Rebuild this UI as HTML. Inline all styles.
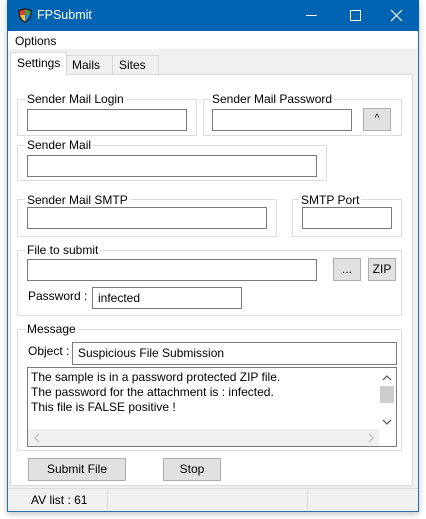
<!DOCTYPE html>
<html><head><style>
*{box-sizing:border-box;margin:0;padding:0}
body{width:426px;height:519px;background:#fff;position:relative;overflow:hidden;font-family:"Liberation Sans",sans-serif;font-size:12px;color:#000}
.a{position:absolute}
.win{left:7px;top:0;width:412px;height:512px;border:1px solid #2b6cb0;background:#f0f0f0;box-shadow:0 2px 6px rgba(0,0,0,.25)}
.tb{left:7px;top:0;width:412px;height:31px;background:#0063b1;color:#fff}
.gb{border:1px solid #dcdcdc}
.lbl{background:#fff;padding:0 2px;line-height:14px;white-space:nowrap}
.tx{border:1px solid #7a7a7a;background:#fff;padding:2px 5px;line-height:16px;white-space:nowrap}
.bt{border:1px solid #adadad;background:#e1e1e1;text-align:center;line-height:20px}
</style></head><body>
<div class="a win"></div>
<div class="a tb">
<svg class="a" style="left:10px;top:7px" width="16" height="17" viewBox="0 0 16 17"><path d="M8 1 L15 3 L14 10 Q12 14 8 16 Q4 14 2 10 L1 3 Z" fill="#222"/><path d="M8 2.5 L2.5 4 L3 8 L8 8 Z" fill="#e53935"/><path d="M8 2.5 L13.5 4 L13 8 L8 8Z" fill="#43a047"/><path d="M3 8 L8 8 L8 14.5 Q4.5 12.5 3 8Z" fill="#fbc02d"/><path d="M8 8 L13 8 Q11.5 12.5 8 14.5Z" fill="#1e88e5"/></svg>
<div class="a" style="left:30px;top:8px;font-size:12.5px">FPSubmit</div>
<div class="a" style="left:299px;top:15px;width:11px;height:1px;background:#fff"></div>
<div class="a" style="left:343px;top:10px;width:11px;height:11px;border:1px solid #fff"></div>
<svg class="a" style="left:383px;top:9px" width="13" height="13"><path d="M1 1L12 12M12 1L1 12" stroke="#fff" stroke-width="1.2"/></svg>
</div>
<div class="a" style="left:8px;top:31px;width:410px;height:18px;background:#fff"></div>
<div class="a" style="left:15px;top:34px">Options</div>
<div class="a" style="left:66px;top:55px;width:47px;height:20px;border:1px solid #d9d9d9;border-bottom:none;background:#f0f0f0;padding:2px 0 0 5px">Mails</div>
<div class="a" style="left:112px;top:55px;width:47px;height:20px;border:1px solid #d9d9d9;border-bottom:none;background:#f0f0f0;padding:2px 0 0 6px">Sites</div>
<div class="a" style="left:10px;top:74px;width:403px;height:412px;border:1px solid #d9d9d9;background:#fff"></div>
<div class="a" style="left:10px;top:52px;width:57px;height:23px;border:1px solid #d9d9d9;border-bottom:none;background:#fff;padding:3px 0 0 6px">Settings</div>
<div class="a gb" style="left:17px;top:99px;width:180px;height:37px"></div>
<div class="a lbl" style="left:25px;top:92px">Sender Mail Login</div>
<div class="a tx" style="left:27px;top:109px;width:160px;height:22px"></div>
<div class="a gb" style="left:203px;top:99px;width:199px;height:37px"></div>
<div class="a lbl" style="left:210px;top:92px">Sender Mail Password</div>
<div class="a tx" style="left:212px;top:109px;width:140px;height:22px"></div>
<div class="a bt" style="left:363px;top:108px;width:28px;height:23px;font-size:10px">^</div>
<div class="a gb" style="left:17px;top:145px;width:310px;height:36px"></div>
<div class="a lbl" style="left:25px;top:138px">Sender Mail</div>
<div class="a tx" style="left:27px;top:155px;width:290px;height:22px"></div>
<div class="a gb" style="left:17px;top:199px;width:260px;height:38px"></div>
<div class="a lbl" style="left:25px;top:193px">Sender Mail SMTP</div>
<div class="a tx" style="left:27px;top:207px;width:240px;height:22px"></div>
<div class="a gb" style="left:292px;top:199px;width:110px;height:38px"></div>
<div class="a lbl" style="left:299px;top:193px">SMTP Port</div>
<div class="a tx" style="left:302px;top:207px;width:90px;height:22px"></div>
<div class="a gb" style="left:17px;top:250px;width:385px;height:66px"></div>
<div class="a lbl" style="left:25px;top:243px">File to submit</div>
<div class="a tx" style="left:27px;top:259px;width:290px;height:22px"></div>
<div class="a bt" style="left:333px;top:258px;width:28px;height:23px">...</div>
<div class="a bt" style="left:368px;top:258px;width:28px;height:23px">ZIP</div>
<div class="a" style="left:28px;top:289px">Password :</div>
<div class="a tx" style="left:92px;top:287px;width:150px;height:22px">infected</div>
<div class="a gb" style="left:17px;top:329px;width:385px;height:122px"></div>
<div class="a lbl" style="left:25px;top:322px">Message</div>
<div class="a" style="left:28px;top:344px">Object :</div>
<div class="a tx" style="left:72px;top:342px;width:325px;height:23px">Suspicious File Submission</div>
<div class="a" style="left:27px;top:367px;width:370px;height:80px;border:1px solid #7a7a7a;background:#fff"></div>
<div class="a" style="left:31px;top:370px;line-height:15px">The sample is in a password protected ZIP file.<br>The password for the attachment is : infected.<br>This file is FALSE positive !</div>
<div class="a" style="left:379px;top:368px;width:17px;height:61px;background:#fff"></div>
<div class="a" style="left:380px;top:386px;width:14px;height:17px;background:#cdcdcd"></div>
<svg class="a" style="left:379px;top:372px" width="16" height="56"><path d="M4 8L8 4L12 8M4 48L8 52L12 48" stroke="#606060" stroke-width="1.3" fill="none"/></svg>
<div class="a" style="left:28px;top:429px;width:351px;height:17px;background:#f0f0f0"></div>
<svg class="a" style="left:30px;top:430px" width="348" height="15"><path d="M9 4L5 8L9 12M339 4L343 8L339 12" stroke="#c0c0c0" stroke-width="1.3" fill="none"/></svg>
<div class="a bt" style="left:28px;top:458px;width:98px;height:23px">Submit File</div>
<div class="a bt" style="left:163px;top:458px;width:58px;height:23px">Stop</div>
<div class="a" style="left:8px;top:488px;width:410px;height:1px;background:#dadada"></div>
<div class="a" style="left:107px;top:489px;width:1px;height:22px;background:#dadada"></div>
<div class="a" style="left:307px;top:489px;width:1px;height:22px;background:#dadada"></div>
<div class="a" style="left:31px;top:493px">AV list : 61</div>
</body></html>
